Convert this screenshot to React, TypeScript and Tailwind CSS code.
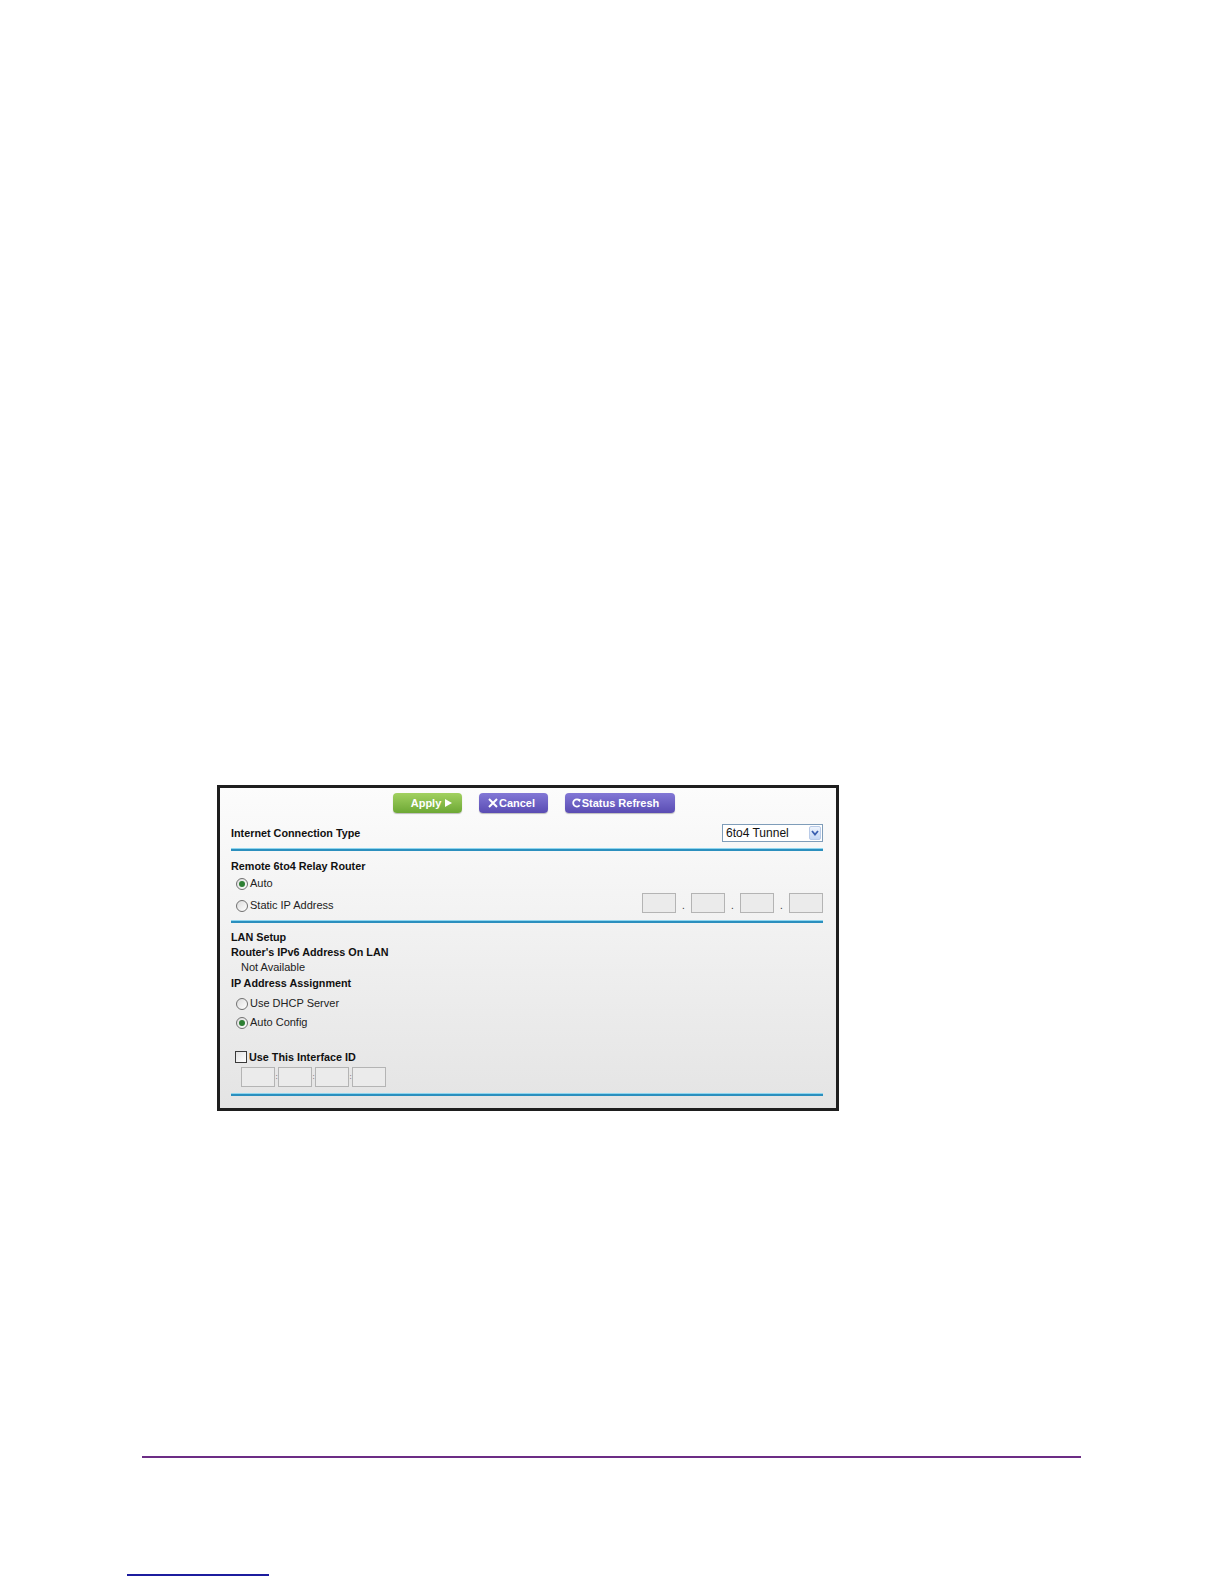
import React from "react"

function Radio({ checked }: { checked?: boolean }) {
  return (
    <span className="flex h-[12px] w-[12px] items-center justify-center rounded-full border border-[#707070] bg-gradient-to-br from-[#dcdcdc] to-white">
      {checked && <span className="h-[6px] w-[6px] rounded-full bg-[#2d7f33]" />}
    </span>
  )
}

function Box({ w = "w-[34px]", h = "h-[20px]" }: { w?: string; h?: string }) {
  return <span className={`${w} ${h} block border border-[#b4b4b4] bg-[#ebebeb]`} />
}

function Separator() {
  return (
    <div className="flex flex-col">
      <div className="h-[1px] bg-[#8fd6ef]" />
      <div className="h-[2px] bg-[#2b8fbe]" />
    </div>
  )
}

function Heading({ children, h = "h-[15px]" }: { children: React.ReactNode; h?: string }) {
  return <div className={`${h} flex items-center text-[10.8px] font-bold leading-none text-[#111]`}>{children}</div>
}

function RadioRow({ label, checked, h = "h-[19px]" }: { label: string; checked?: boolean; h?: string }) {
  return (
    <div className={`${h} flex items-center pl-[5px]`}>
      <Radio checked={checked} />
      <span className="ml-[2px] text-[11px] leading-none text-[#222]">{label}</span>
    </div>
  )
}

export default function App() {
  return (
    <div className="h-[1584px] w-[1224px] overflow-hidden bg-white font-['Liberation_Sans',Arial,sans-serif]">
      <div className="pl-[217px] pt-[785px]">
        <div className="w-[622px] border-[3px] border-[#1e1e1e] bg-gradient-to-b from-[#fcfcfc] to-[#e4e4e4] pb-[12px] pl-[11px] pr-[13px] pt-[5px]">
          {/* buttons */}
          <div className="flex h-[20px] gap-[17px] pl-[162px]">
            <button className="flex h-[20px] w-[69px] items-center justify-center gap-[4px] rounded-[4px] bg-gradient-to-b from-[#a2d160] to-[#6da834] pl-[8px] text-[11px] font-bold text-white shadow-[0_1px_1px_rgba(0,0,0,0.25)]">
              Apply
              <svg width="7" height="8" viewBox="0 0 7 8">
                <polygon points="0,0 7,4 0,8" fill="white" />
              </svg>
            </button>
            <button className="flex h-[20px] w-[69px] items-center justify-center gap-[1px] rounded-[4px] bg-gradient-to-b from-[#8378d6] to-[#5a4cb3] pr-[4px] text-[11px] font-bold text-white shadow-[0_1px_1px_rgba(0,0,0,0.25)]">
              <svg width="10" height="10" viewBox="0 0 10 10">
                <path d="M1 1 L9 9 M9 1 L1 9" stroke="white" strokeWidth="2" />
              </svg>
              Cancel
            </button>
            <button className="flex h-[20px] w-[110px] items-center justify-center gap-[1px] rounded-[4px] bg-gradient-to-b from-[#8378d6] to-[#5a4cb3] pr-[9px] text-[11px] font-bold text-white shadow-[0_1px_1px_rgba(0,0,0,0.25)]">
              <svg width="9" height="10" viewBox="0 0 9 10">
                <path d="M7.5 2.6 A3.6 3.6 0 1 0 7.6 7.2" stroke="white" strokeWidth="1.8" fill="none" />
                <polygon points="5.4,0.6 8.8,1.2 7.6,4.2" fill="white" />
              </svg>
              Status Refresh
            </button>
          </div>

          {/* connection type */}
          <div className="mt-[11px] flex h-[18px] items-center justify-between">
            <span className="text-[10.8px] font-bold leading-none text-[#111]">Internet Connection Type</span>
            <div className="flex h-[18px] w-[101px] items-center justify-between border border-[#7f9db9] bg-white pl-[3px] pr-[1px]">
              <span className="text-[12px] leading-none text-[#111]">6to4 Tunnel</span>
              <span className="flex h-[14px] w-[12px] items-center justify-center rounded-[2px] border border-[#b9cbe8] bg-gradient-to-b from-[#eef4fd] to-[#c6d8f4]">
                <svg width="8" height="6" viewBox="0 0 8 6">
                  <path d="M1 1 L4 4.5 L7 1" stroke="#3a5fb0" strokeWidth="1.8" fill="none" />
                </svg>
              </span>
            </div>
          </div>
          <div className="mt-[6px]">
            <Separator />
          </div>

          {/* remote relay */}
          <div className="mt-[8px]">
            <Heading>Remote 6to4 Relay Router</Heading>
          </div>
          <RadioRow label="Auto" checked />
          <div className="flex h-[20px] items-center justify-between">
            <div className="flex items-center pl-[5px] pt-[5px]">
              <Radio />
              <span className="ml-[2px] text-[11px] leading-none text-[#222]">Static IP Address</span>
            </div>
            <div className="flex items-end">
              <Box />
              <span className="flex w-[15px] justify-center pb-[2px] text-[10px] leading-none text-[#333]">.</span>
              <Box />
              <span className="flex w-[15px] justify-center pb-[2px] text-[10px] leading-none text-[#333]">.</span>
              <Box />
              <span className="flex w-[15px] justify-center pb-[2px] text-[10px] leading-none text-[#333]">.</span>
              <Box />
            </div>
          </div>
          <div className="mt-[7px]">
            <Separator />
          </div>

          {/* LAN setup */}
          <div className="mt-[7px]">
            <Heading>LAN Setup</Heading>
            <Heading>Router's IPv6 Address On LAN</Heading>
            <div className="flex h-[15px] items-center pl-[10px] text-[11px] leading-none text-[#222]">Not Available</div>
            <Heading h="h-[16px]">IP Address Assignment</Heading>
          </div>
          <div className="mt-[3px]">
            <RadioRow label="Use DHCP Server" />
            <RadioRow label="Auto Config" checked />
          </div>

          {/* interface id */}
          <div className="mt-[16px] flex h-[18px] items-center pl-[4px]">
            <span className="block h-[12px] w-[12px] border border-[#3a3a3a] bg-gradient-to-br from-[#e2e2e2] to-white" />
            <span className="ml-[2px] text-[10.8px] font-bold leading-none text-[#111]">Use This Interface ID</span>
          </div>
          <div className="mt-[1px] flex h-[20px] items-center pl-[10px]">
            <Box />
            <span className="flex w-[3px] justify-center text-[8px] leading-none text-[#555]">:</span>
            <Box />
            <span className="flex w-[3px] justify-center text-[8px] leading-none text-[#555]">:</span>
            <Box />
            <span className="flex w-[3px] justify-center text-[8px] leading-none text-[#555]">:</span>
            <Box />
          </div>
          <div className="mt-[6px]">
            <Separator />
          </div>
        </div>
      </div>

      <div className="ml-[142px] mt-[345px] h-[2px] w-[939px] bg-[#6c2d85]" />
      <div className="ml-[127px] mt-[116px] h-[2px] w-[142px] bg-[#1c1c9e]" />
    </div>
  )
}
